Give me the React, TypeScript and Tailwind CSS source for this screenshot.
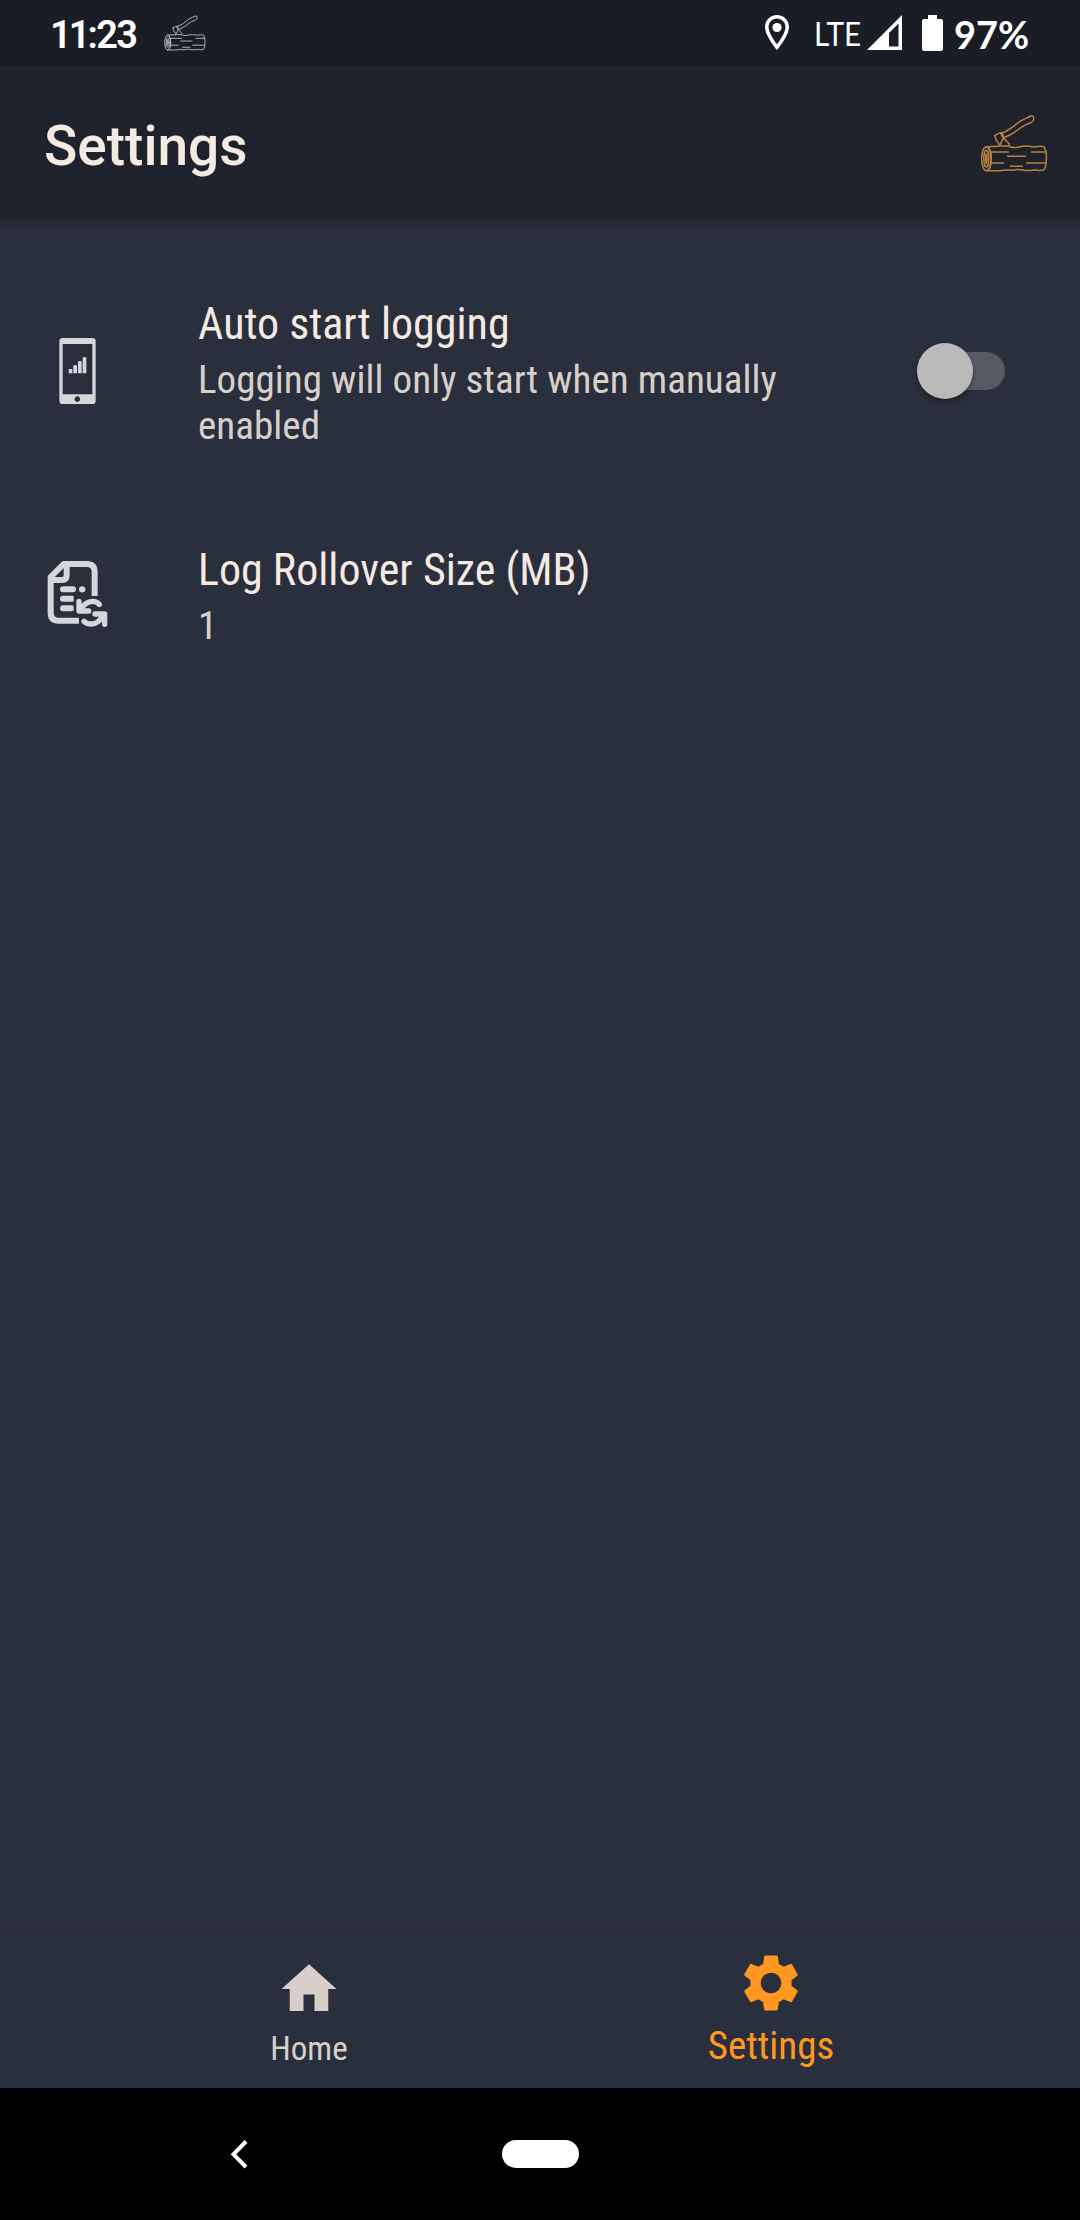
import type { ReactNode } from "react";

function LogLogo({ className }: { className: string }) {
  return (
    <svg
      viewBox="0 0 330 270"
      className={className}
      fill="none"
      stroke="currentColor"
      strokeWidth="4.5"
      strokeLinecap="round"
      strokeLinejoin="round"
    >
      {/* axe handle */}
      <path d="M127 98 C150 92 162 76 180 64 C192 57 203 53 212 48 Q222 47 221 57 Q221 64 213 68 C196 72 180 84 166 95 C154 104 143 109 131 113" />
      {/* axe head */}
      <path d="M104 106 L121 98 L127 99 L131 114 L148 132 Q148 138 142 138 L124 138 L119 135 Q107 122 104 106 Z" />
      <path d="M121 98 L130 116 L119 135" />
      {/* trunk */}
      <path d="M78 140 L118 139 M148 140 Q165 145 180 140 T222 141 Q240 137 252 140 Q261 155 259 178 Q259 200 251 210 Q238 213 224 209 Q206 214 190 210 Q172 206 158 211 Q138 208 120 212 L78 212" />
      <ellipse cx="79" cy="176" rx="14" ry="36" />
      <ellipse cx="79" cy="176" rx="7.5" ry="25" />
      <ellipse cx="79" cy="176" rx="2" ry="14" />
      <path d="M86 142 Q95 158 94 176 Q94 198 86 210" />
      {/* bark */}
      <path d="M93 156 H146 M215 156 H257 M142 169 H196 M95 189 H130 M200 189 H257 M151 199 H187" />
    </svg>
  );
}

function PhoneIcon() {
  return (
    <svg viewBox="0 6 300 300" className="h-[100px] w-[100px] text-[#d5d6da]" fill="currentColor">
      <path
        fillRule="evenodd"
        d="M98 54 H187 Q197 54 197 64 V242 Q197 252 187 252 H98 Q88 252 88 242 V64 Q88 54 98 54 Z M98 72 V223 H187 V72 Z M142 229 a8.500 8.500 0 1 0 0.010 0 Z"
      />
      <path d="M116 147 h11 v13 h-11 Z M130 136 h11 v24 h-11 Z M144 124 h11 v36 h-11 Z M158 112 h11 v48 h-11 Z" />
    </svg>
  );
}

function RolloverIcon() {
  return (
    <svg
      viewBox="0 15 300 300"
      className="h-[100px] w-[100px] text-[#d5d6da]"
      fill="none"
      stroke="currentColor"
      strokeWidth="18"
      strokeLinejoin="round"
    >
      {/* page outline with folded corner */}
      <path d="M194 168 V96 Q194 72 170 72 H101 L62 111 V218 Q62 242 86 242 H147" />
      <path d="M110 74 V106 Q110 120 96 120 H64" />
      {/* text lines */}
      <path strokeLinecap="round" d="M99 148 H129" />
      <path strokeLinecap="round" d="M156.5 147.9 H156.6" strokeWidth="19" />
      <path strokeLinecap="round" d="M99 176 H126 M99 205 H124" />
      <path d="M143 168 V222" stroke="#2a2f3d" strokeWidth="24" />
      {/* rotating arrows */}
      <path strokeLinecap="round" strokeWidth="16" d="M147 184 V213 H176 M151 209 Q166 185 187 184 Q201 184 208 193" />
      <path strokeLinecap="round" strokeWidth="16" d="M224 253 V222 H195 M219 227 Q206 251 183 252 Q170 252 162 244" />
    </svg>
  );
}

function StatusBar() {
  return (
    <div className="flex h-[66px] bg-[#1a1d26] text-white">
      <div className="w-[151px] pt-[11px] pl-[50px] font-['Roboto'] text-[38px] leading-[48px] font-semibold">
        <span className="tracking-[-3px]">11</span>
        <span className="tracking-[-1.600px]">:23</span>
      </div>
      <LogLogo className="mt-[6px] h-[56px] w-[69px] text-[#b9babd]" />
      <svg viewBox="0 0 24 36" className="mt-[15px] ml-[545px] h-[36px] w-[24px]">
        <path
          fill="white"
          fillRule="evenodd"
          d="M12 0 C18.800 0 24 5.300 24 12 C24 21 12 35 12 35 S0 21 0 12 C0 5.300 5.200 0 12 0 Z M12 3.600 C7.200 3.600 3.600 7.300 3.600 12 C3.600 17.500 9 25.500 12 29.300 C15 25.500 20.400 17.500 20.400 12 C20.400 7.300 16.800 3.600 12 3.600 Z"
        />
        <circle cx="12" cy="12.500" r="4.600" fill="white" />
      </svg>
      <div className="ml-[25px] w-[53px] origin-left scale-x-90 pt-[9px] font-['Lato'] text-[33px] leading-[48px]">
        LTE
      </div>
      <svg viewBox="0 0 35 35" className="mt-[15px] h-[35px] w-[35px]">
        <path fill="white" fillRule="evenodd" d="M35 0 V35 H0 Z M31.500 8.500 L22 18 V31.500 H31.500 Z" />
      </svg>
      <svg viewBox="0 0 21 36" className="mt-[15px] ml-[20px] h-[36px] w-[21px]">
        <path
          fill="white"
          d="M6 0 H15 V4 H19 Q21 4 21 6 V34 Q21 36 19 36 H2 Q0 36 0 34 V6 Q0 4 2 4 H6 Z"
        />
      </svg>
      <div className="ml-[11px] pt-[10px] font-['Lato'] text-[38px] leading-[48px] font-bold">97%</div>
    </div>
  );
}

function PreferenceRow({
  icon,
  title,
  summary,
  children,
}: {
  icon: ReactNode;
  title: string;
  summary: string;
  children?: ReactNode;
}) {
  return (
    <div className="flex items-center pt-12 pr-[75px] pb-11 pl-[30px]">
      <div className="-my-6 mr-[68px] shrink-0">{icon}</div>
      <div className="w-[620px]">
        <div className="text-[44px] leading-[58px] text-[#f5e9e1]">{title}</div>
        <div className="mt-1 text-[39px] leading-[46px] tracking-[0.060px] text-[#d9cfca]">{summary}</div>
      </div>
      {children}
    </div>
  );
}

function Toggle() {
  return (
    <div className="-mt-0.5 ml-auto flex h-[56px] w-[88px] items-center">
      <div className="z-10 -mr-[28px] size-[56px] shrink-0 rounded-full bg-[#b9b9b9] shadow-[0_3px_5px_rgba(0,0,0,0.350)]" />
      <div className="h-[38px] w-[60px] rounded-r-full bg-[#575a63]" />
    </div>
  );
}

function BottomNav() {
  return (
    <nav className="flex h-[154px] justify-center bg-[#2a2f3d] shadow-[0_-1px_6px_rgba(50,20,40,0.150)]">
      <div className="flex w-[462px] flex-col items-center pt-[22px] text-[#d9cfca]">
        <svg viewBox="0 0 24 24" className="size-[66px]" fill="currentColor">
          <path d="M10 20v-6h4v6h5v-8h3L12 3 2 12h3v8z" />
        </svg>
        <span className="mt-[7px] text-[33px] leading-[39px]">Home</span>
      </div>
      <div className="flex w-[462px] flex-col items-center pt-[16px] text-[#ff9820]">
        <svg viewBox="0 0 24 24" className="size-[66px]" fill="currentColor">
          <path d="M19.430 12.980c.04-.32.07-.64.07-.98s-.03-.66-.07-.98l2.110-1.650c.19-.15.24-.42.12-.64l-2-3.460c-.12-.22-.39-.3-.61-.22l-2.490 1c-.52-.4-1.080-.73-1.690-.98l-.38-2.650C14.460 2.180 14.250 2 14 2h-4c-.25 0-.46.18-.49.42l-.38 2.650c-.61.25-1.170.59-1.690.98l-2.490-1c-.23-.09-.49 0-.61.22l-2 3.460c-.13.22-.07.49.12.64l2.110 1.650c-.04.32-.07.65-.07.98s.03.66.07.98l-2.110 1.650c-.19.15-.24.42-.12.64l2 3.460c.12.22.39.3.61.22l2.490-1c.52.4 1.080.73 1.690.98l.38 2.650c.03.24.24.42.49.42h4c.25 0 .46-.18.49-.42l.38-2.650c.61-.25 1.170-.59 1.690-.98l2.490 1c.23.09.49 0 .61-.22l2-3.460c.12-.22.07-.49-.12-.64l-2.110-1.650zM12 15.750c-2.070 0-3.750-1.680-3.750-3.750s1.680-3.750 3.750-3.750 3.750 1.680 3.750 3.750-1.680 3.750-3.750 3.750z" />
        </svg>
        <span className="mt-[8px] text-[39px] leading-[45px]">Settings</span>
      </div>
    </nav>
  );
}

export default function App() {
  return (
    <div className="flex h-[2220px] w-[1080px] flex-col overflow-hidden bg-[#2a2f3d] font-['Roboto_Condensed',Roboto,sans-serif]">
      <StatusBar />
      <header className="flex h-[154px] items-center justify-between bg-[#1e222d] pr-[10px] pl-[44px] shadow-[0_2px_6px_rgba(20,12,24,0.350)]">
        <h1 className="pt-1.5 font-['Roboto'] text-[55px] leading-[64px] font-medium text-[#f5e9e1]">Settings</h1>
        <LogLogo className="mt-1 h-[90px] w-[110px] text-[#b9803f]" />
      </header>
      <main className="flex-1 pt-[27px]">
        <PreferenceRow
          icon={<PhoneIcon />}
          title="Auto start logging"
          summary="Logging will only start when manually enabled"
        >
          <Toggle />
        </PreferenceRow>
        <PreferenceRow icon={<RolloverIcon />} title="Log Rollover Size (MB)" summary="1" />
      </main>
      <BottomNav />
      <div className="flex h-[132px] items-center bg-black">
        <svg
          viewBox="0 0 20 32"
          className="ml-[229px] h-[32px] w-[20px]"
          fill="none"
          stroke="white"
          strokeWidth="4"
        >
          <path d="M17 3.500 L4.500 16.300 L17 29" />
        </svg>
        <div className="ml-[253px] h-[28px] w-[77px] rounded-full bg-white" />
      </div>
    </div>
  );
}
